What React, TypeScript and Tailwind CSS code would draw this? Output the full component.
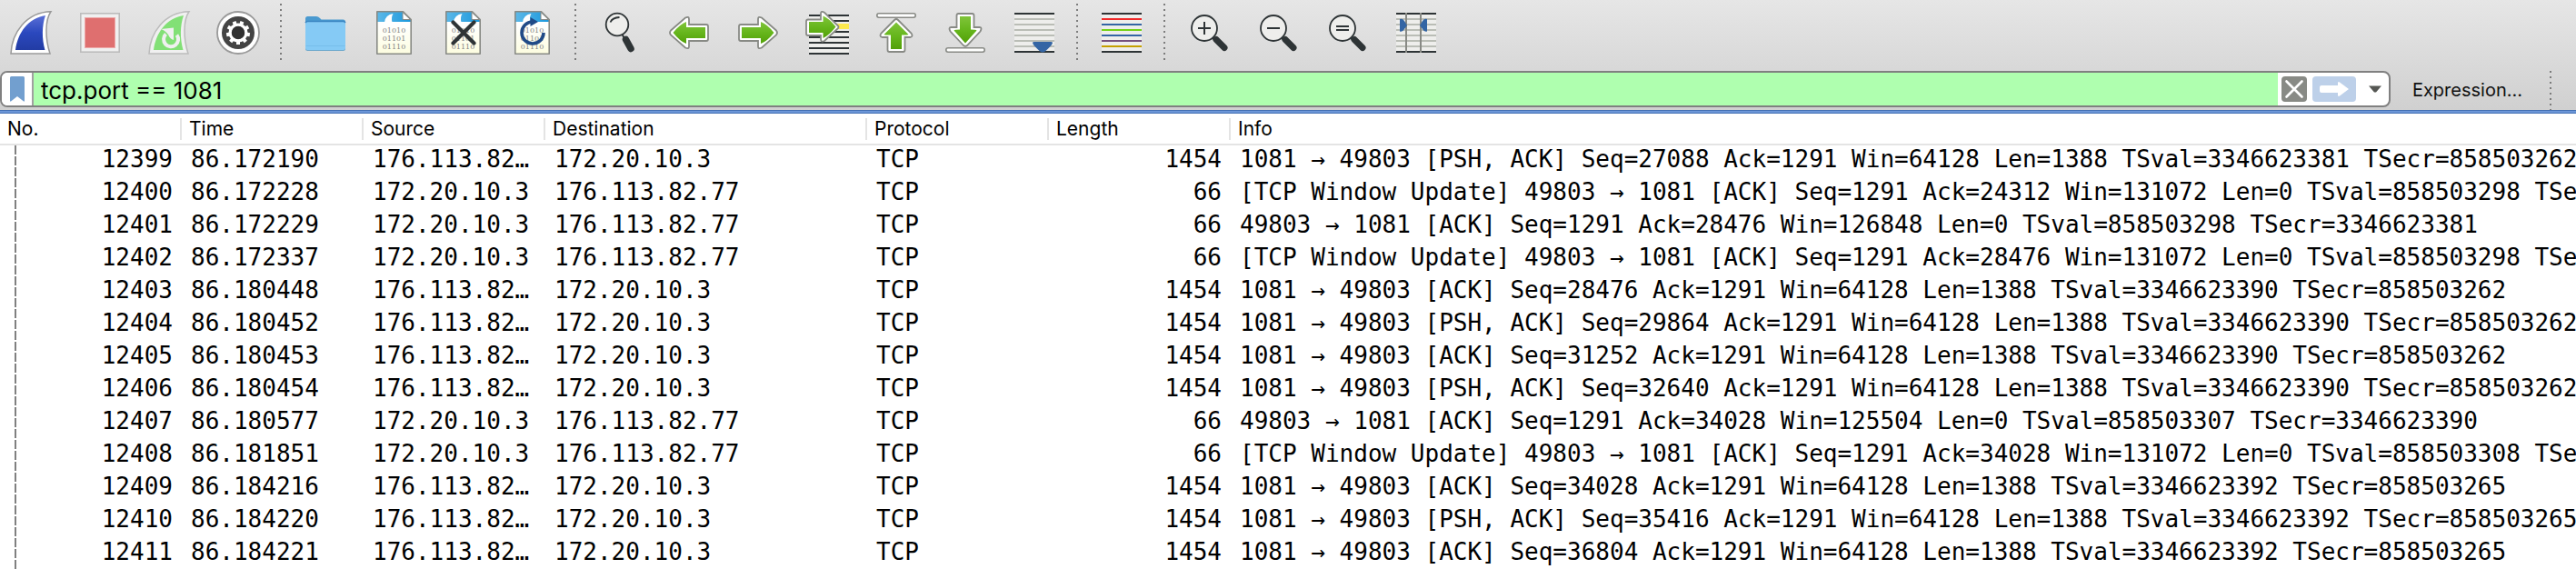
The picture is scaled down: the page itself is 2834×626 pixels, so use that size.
import React from "react";

type Packet = [string, string, string, string, string, string];

const A = "176.113.82.77";
const B = "172.20.10.3";

const packets: Packet[] = [
  ["12399", "86.172190", A, B, "1454", "1081 → 49803 [PSH, ACK] Seq=27088 Ack=1291 Win=64128 Len=1388 TSval=3346623381 TSecr=858503262"],
  ["12400", "86.172228", B, A, "66", "[TCP Window Update] 49803 → 1081 [ACK] Seq=1291 Ack=24312 Win=131072 Len=0 TSval=858503298 TSecr=3346623381"],
  ["12401", "86.172229", B, A, "66", "49803 → 1081 [ACK] Seq=1291 Ack=28476 Win=126848 Len=0 TSval=858503298 TSecr=3346623381"],
  ["12402", "86.172337", B, A, "66", "[TCP Window Update] 49803 → 1081 [ACK] Seq=1291 Ack=28476 Win=131072 Len=0 TSval=858503298 TSecr=3346623381"],
  ["12403", "86.180448", A, B, "1454", "1081 → 49803 [ACK] Seq=28476 Ack=1291 Win=64128 Len=1388 TSval=3346623390 TSecr=858503262"],
  ["12404", "86.180452", A, B, "1454", "1081 → 49803 [PSH, ACK] Seq=29864 Ack=1291 Win=64128 Len=1388 TSval=3346623390 TSecr=858503262"],
  ["12405", "86.180453", A, B, "1454", "1081 → 49803 [ACK] Seq=31252 Ack=1291 Win=64128 Len=1388 TSval=3346623390 TSecr=858503262"],
  ["12406", "86.180454", A, B, "1454", "1081 → 49803 [PSH, ACK] Seq=32640 Ack=1291 Win=64128 Len=1388 TSval=3346623390 TSecr=858503262"],
  ["12407", "86.180577", B, A, "66", "49803 → 1081 [ACK] Seq=1291 Ack=34028 Win=125504 Len=0 TSval=858503307 TSecr=3346623390"],
  ["12408", "86.181851", B, A, "66", "[TCP Window Update] 49803 → 1081 [ACK] Seq=1291 Ack=34028 Win=131072 Len=0 TSval=858503308 TSecr=3346623390"],
  ["12409", "86.184216", A, B, "1454", "1081 → 49803 [ACK] Seq=34028 Ack=1291 Win=64128 Len=1388 TSval=3346623392 TSecr=858503265"],
  ["12410", "86.184220", A, B, "1454", "1081 → 49803 [PSH, ACK] Seq=35416 Ack=1291 Win=64128 Len=1388 TSval=3346623392 TSecr=858503265"],
  ["12411", "86.184221", A, B, "1454", "1081 → 49803 [ACK] Seq=36804 Ack=1291 Win=64128 Len=1388 TSval=3346623392 TSecr=858503265"],
];

const columns = ["No.", "Time", "Source", "Destination", "Protocol", "Length", "Info"];

function Defs() {
  return (
    <svg className="absolute size-0" aria-hidden="true">
      <defs>
        <linearGradient id="blueFin" x1="0" y1="0" x2="0" y2="1">
          <stop offset="0" stopColor="#5a70d6" />
          <stop offset="0.5" stopColor="#2b48be" />
          <stop offset="1" stopColor="#223ca4" />
        </linearGradient>
        <linearGradient id="green" x1="0" y1="0" x2="0" y2="1">
          <stop offset="0" stopColor="#80c43a" />
          <stop offset="0.5" stopColor="#66b61c" />
          <stop offset="1" stopColor="#52a008" />
        </linearGradient>
        <linearGradient id="paper" x1="0" y1="0" x2="0" y2="1">
          <stop offset="0.3" stopColor="#ffffff" />
          <stop offset="1" stopColor="#fdfde0" />
        </linearGradient>
        <linearGradient id="sky" x1="0" y1="0" x2="1" y2="0">
          <stop offset="0" stopColor="#5cb8e8" />
          <stop offset="1" stopColor="#1b98dc" />
        </linearGradient>
      </defs>
    </svg>
  );
}

function Svg({ children }: { children: React.ReactNode }) {
  return (
    <svg viewBox="0 0 48 48" className="size-12" fill="none" aria-hidden="true">
      {children}
    </svg>
  );
}

function Fin({ restart = false }: { restart?: boolean }) {
  return (
    <Svg>
      <path
        d="M46 .8C39.500 10 39.500 30 45 47H2C3 24 19 1.500 46 .8Z"
        fill={restart ? "#f0f0f0" : "#fff"}
        stroke={restart ? "#bcbcbc" : "#9a9a9a"}
        strokeWidth="1.500"
      />
      <path
        d="M40 5C36 16 36 31 39.500 43H7C9.500 24 21 8 40 5Z"
        fill={restart ? "#82e076" : "url(#blueFin)"}
      />
      {restart && (
        <>
          <path d="M20.500 25.500A8 8 0 1 0 32.500 26.500" stroke="#f0f0f0" strokeWidth="4" />
          <path d="M15 20L29 18.500V32Q25 31 23 26Q19 21 15 20Z" fill="#f0f0f0" />
        </>
      )}
    </Svg>
  );
}

function Stop() {
  return (
    <Svg>
      <rect x="2.800" y="2.800" width="42.400" height="42.400" fill="#f0f0f0" stroke="#bcbcbc" strokeWidth="1.600" />
      <rect x="7" y="7" width="34" height="34" fill="#eda9a9" />
      <rect x="8" y="8" width="32" height="32" fill="#df6f6f" />
    </Svg>
  );
}

function Gear() {
  return (
    <Svg>
      <circle cx="24" cy="24" r="23" fill="#fff" stroke="#9a9a9a" strokeWidth="1.800" />
      <circle cx="24" cy="24" r="18" fill="#444" />
      <circle cx="24" cy="24" r="8.800" stroke="#fff" strokeWidth="3.400" />
      {[20, 60, 100, 140, 180, 220, 260, 300, 340].map((a) => (
        <rect key={a} x="22" y="11" width="4" height="4" fill="#fff" transform={`rotate(${a} 24 24)`} />
      ))}
      <circle cx="24" cy="24" r="7.200" fill="#303030" />
    </Svg>
  );
}

function Folder() {
  return (
    <Svg>
      <path d="M2 8.500Q2 6 4.500 6H14Q16 6 18 8L19.500 9.500H43.500Q46 9.500 46 12V22H2Z" fill="#4a9ad0" />
      <rect x="2" y="13" width="44" height="31" rx="2.500" fill="#6fa9cc" />
      <rect x="2" y="12" width="44" height="31" rx="2.500" fill="#85caf5" />
      <path d="M2 13Q2.500 11.500 4.500 11.500H43.500Q45.500 11.500 46 13" stroke="#3c86c2" strokeWidth="1.500" />
      <path d="M2.500 38.500H45.500" stroke="#76bdeb" />
    </Svg>
  );
}

function Page({ children }: { children?: React.ReactNode }) {
  return (
    <Svg>
      <path d="M5 1H33L42 10V47H5Z" fill="url(#paper)" />
      <path d="M5 1H33L42 10V12H5Z" fill="url(#sky)" />
      <path d="M13 12.500Q14 4 22.500 3Q20 7 21.500 12.500Z" fill="#fff" />
      <g fill="#858585" fontFamily="DejaVu Serif, serif" fontSize="8" textAnchor="middle">
        <text x="23.500" y="24">01010</text>
        <text x="23.500" y="33">01101</text>
        <text x="23.500" y="42">01110</text>
      </g>
      <path d="M33 1.500V9.500H41.500Z" fill="#fff" stroke="#888a85" strokeWidth="1" />
      <path d="M4.800 .8H33.500L42.200 9.500V47.200H4.800Z" stroke="#888a85" strokeWidth="1.600" strokeLinejoin="round" />
      {children}
    </Svg>
  );
}

function Find() {
  return (
    <Svg>
      <path d="M26 25L30 32" stroke="#2e3436" strokeWidth="2" />
      <circle cx="21" cy="15" r="12.300" fill="#eeeeec" stroke="#2e3436" strokeWidth="1.800" />
      <path d="M13.500 12.500Q15.500 7.500 23.500 7" stroke="#2e3436" strokeWidth="1.800" />
      <path d="M30.500 31.500L36 41.500" stroke="#2e3436" strokeWidth="7.500" strokeLinecap="round" />
    </Svg>
  );
}

function ArrowShape({ flip = false }: { flip?: boolean }) {
  return (
    <g transform={flip ? "matrix(-1 0 0 1 48 0)" : undefined}>
      <path
        d="M4 21.500L20 7.500Q24 5.500 24 9V15H43Q45 15 45 17V31Q45 33 43 33H24V39Q24 42.500 20 40.500L4 26.500Q2 24 4 21.500Z"
        fill="#fff"
        stroke="#888a85"
        strokeWidth="1.800"
      />
      <path d="M6.500 24Q14 14.500 21 12V18H42V30H21V36Q14 33.500 6.500 24Z" fill="url(#green)" />
    </g>
  );
}

function VArrow({ up = false }: { up?: boolean }) {
  return (
    <Svg>
      <rect x="2.800" y={up ? 2.8 : 40.8} width="42.400" height="4.400" rx="2.200" fill="#fff" stroke="#888a85" strokeWidth="1.600" />
      {up ? (
        <>
          <path d="M22 10L7.500 24.500Q5 28 8.500 29H14.500V43Q14.500 45 16.500 45H31.500Q33.500 45 33.500 43V29H39.500Q43 28 40.500 24.500L26 10Q24 8 22 10Z" fill="#fff" stroke="#888a85" strokeWidth="1.800" />
          <path d="M24 12.500L10.500 26Q11 26.500 18 26.500V42H30V26.500Q37 26.500 37.500 26Z" fill="url(#green)" />
        </>
      ) : (
        <>
          <path d="M22 38L7.500 22.500Q5 18 8.500 18H14.500V5Q14.500 3 16.500 3H31.500Q33.500 3 33.500 5V18H39.500Q43 18 40.500 22.500L26 38Q24 39.500 22 38Z" fill="#fff" stroke="#888a85" strokeWidth="1.800" />
          <path d="M24 35.500L11.500 21.500Q12 20.500 18 20.500V6H30V20.500Q36 20.500 36.500 21.500Z" fill="url(#green)" />
        </>
      )}
    </Svg>
  );
}

function Lines({ colors, start = 2, children }: { colors: string[]; start?: number; children?: React.ReactNode }) {
  return (
    <Svg>
      <rect x={start} y={start} width="44" height="44" fill="#eeeeec" />
      {colors.map((c, i) => (
        <rect key={i} x={start} y={start + i * 6} width="44" height="2" fill={c} />
      ))}
      {children}
    </Svg>
  );
}

const K = "#2e3436";
const G = "#babdb6";

function Zoom({ children }: { children: React.ReactNode }) {
  return (
    <Svg>
      <path d="M27 28L31 32" stroke={K} strokeWidth="3" />
      <circle cx="19" cy="19" r="14" fill="#eeeeec" stroke={K} strokeWidth="1.800" />
      <path d="M32 31.500L41 40.500" stroke={K} strokeWidth="7" strokeLinecap="round" />
      <g stroke={K} strokeWidth="2">{children}</g>
    </Svg>
  );
}

function Tool({ label, children }: { label: string; children: React.ReactNode }) {
  return (
    <button type="button" aria-label={label} className="flex size-12 shrink-0 items-center justify-center">
      {children}
    </button>
  );
}

function Dots({ className = "" }: { className?: string }) {
  return (
    <div
      className={
        "w-[2px] shrink-0 bg-[repeating-linear-gradient(to_bottom,#7c7c7c_0_2px,transparent_2px_6px)] " + className
      }
    />
  );
}

function Toolbar() {
  return (
    <div className="flex h-[78px] shrink-0 items-start overflow-hidden pl-[10px]">
      <div className="flex gap-7 pt-3">
        <Tool label="Start capture"><Fin /></Tool>
        <Tool label="Stop capture"><Stop /></Tool>
        <Tool label="Restart capture"><Fin restart /></Tool>
        <Tool label="Capture options"><Gear /></Tool>
      </div>
      <Dots className="mt-1 ml-[22px] h-[62px]" />
      <div className="ml-6 flex gap-7 pt-3">
        <Tool label="Open file"><Folder /></Tool>
        <Tool label="Save file"><Page /></Tool>
        <Tool label="Close file">
          <Page><path d="M12.500 12.500L35.500 35.500M35.500 12.500L12.500 35.500" stroke={K} strokeWidth="4.200" strokeLinecap="round" /></Page>
        </Tool>
        <Tool label="Reload file">
          <Page>
            <path d="M24 12A12 12 0 1 0 36 24" stroke="#204a87" strokeWidth="3.600" />
            <path d="M21.500 7L30 12L21.500 17Z" fill="#204a87" />
          </Page>
        </Tool>
      </div>
      <Dots className="mt-1 ml-[22px] h-[62px]" />
      <div className="ml-6 flex gap-7 pt-3">
        <Tool label="Find packet"><Find /></Tool>
        <Tool label="Previous packet"><Svg><ArrowShape /></Svg></Tool>
        <Tool label="Next packet"><Svg><ArrowShape flip /></Svg></Tool>
        <Tool label="Go to packet">
          <Lines colors={[K, K, K, K, K, K, K, K]} start={4}>
            <rect x="32" y="14" width="16" height="6" fill="#fce94f" />
            <path d="M35.500 16L21 1.800Q17 -.5 17 3V9.500H3Q1 9.500 1 11.500V25Q1 27 3 27H17V31Q17 35 21 33L35.500 19.500Q37.500 17.500 35.500 16Z" fill="#fff" stroke="#888a85" strokeWidth="1.800" />
            <path d="M33.500 17.500Q26 8 19.500 5.500V12H4V24H19.500V30Q26 27 33.500 17.500Z" fill="url(#green)" />
          </Lines>
        </Tool>
        <Tool label="First packet"><VArrow up /></Tool>
        <Tool label="Last packet"><VArrow /></Tool>
        <Tool label="Auto scroll">
          <Lines colors={[K, G, G, G, G, G, G, K]}>
            <path d="M22 35Q22 34 24 34H42Q44 34 44 35Q44 37 37 43.500Q33 47.500 29 43.500Q22 37 22 35Z" fill="#3465a4" />
          </Lines>
        </Tool>
      </div>
      <Dots className="mt-1 ml-[22px] h-[62px]" />
      <div className="ml-6 flex pt-3">
        <Tool label="Colorize packets">
          <Lines colors={[K, "#ef2929", "#3465a4", "#73d216", "#3465a4", "#75507b", "#c4a000", K]} />
        </Tool>
      </div>
      <Dots className="mt-1 ml-[22px] h-[62px]" />
      <div className="ml-6 flex gap-7 pt-3">
        <Tool label="Zoom in"><Zoom><path d="M12 19H26M19 12V26" /></Zoom></Tool>
        <Tool label="Zoom out"><Zoom><path d="M12 19H26" /></Zoom></Tool>
        <Tool label="Normal size"><Zoom><path d="M12 17H26M12 21H26" /></Zoom></Tool>
        <Tool label="Resize columns">
          <Lines colors={[K, G, G, G, G, G, G, K]}>
            <path d="M13 2V46M29 2V46" stroke="#888a85" strokeWidth="2" />
            <path d="M6 9Q9 8 11 11L14 16L11 20Q9 23.500 6 22.500ZM36 9Q33 8 31 11L28 16L31 20Q33 23.500 36 22.500Z" fill="#3465a4" />
          </Lines>
        </Tool>
      </div>
    </div>
  );
}

function FilterBar() {
  return (
    <div className="flex h-[43px] shrink-0 items-start overflow-hidden">
      <div className="flex h-10 min-w-0 flex-1 items-stretch overflow-hidden rounded-lg border-2 border-[#808080] bg-white">
        <button type="button" aria-label="Filter bookmarks" className="flex w-[35px] shrink-0 items-center justify-center border-r-2 border-[#a0a0a0] bg-white">
          <svg viewBox="0 0 16 28" className="h-7 w-4" aria-hidden="true">
            <path d="M0 1.500Q0 0 1.500 0H14.500Q16 0 16 1.500V27.500H15L8 22L1 27.500H0Z" fill="#729fcf" />
          </svg>
        </button>
        <input
          type="text"
          aria-label="Display filter"
          defaultValue="tcp.port == 1081"
          className="min-w-0 flex-1 bg-[#afffaf] px-2 pt-[2px] text-[26px] text-black outline-none"
        />
        <div className="flex shrink-0 items-center gap-[6px] pl-1">
          <button type="button" aria-label="Clear filter" className="flex size-7 items-center justify-center rounded bg-[#888a85]">
            <svg viewBox="0 0 28 28" className="size-7" aria-hidden="true">
              <path d="M5.500 5.500L22.500 22.500M22.500 5.500L5.500 22.500" stroke="#fff" strokeWidth="2.600" strokeLinecap="round" />
            </svg>
          </button>
          <button type="button" aria-label="Apply filter" className="flex h-7 w-12 items-center justify-center rounded bg-[#bdd0e9]">
            <svg viewBox="0 0 48 28" className="h-7 w-12" aria-hidden="true">
              <path d="M10 10H28V7Q28.500 5.500 30 6.500L40 14L30 21.500Q28.500 22.500 28 21V18H10Q8 18 8 16V12Q8 10 10 10Z" fill="#fff" />
            </svg>
          </button>
          <button type="button" aria-label="Recent filters" className="flex h-7 w-[30px] items-center justify-center">
            <svg viewBox="0 0 14 8" className="h-2 w-[14px]" aria-hidden="true">
              <path d="M0 .5H14L8 7.500H6Z" fill="#555753" />
            </svg>
          </button>
        </div>
      </div>
      <button type="button" className="ml-6 h-[42px] shrink-0 text-[20px] text-[#111]">Expression…</button>
      <Dots className="ml-[30px] h-[43px]" />
      <div className="w-[27px] shrink-0" />
    </div>
  );
}

function PacketList() {
  return (
    <table className="w-full table-fixed border-separate border-spacing-0 bg-white">
      <colgroup>
        <col className="w-[200px]" />
        <col className="w-[200px]" />
        <col className="w-[200px]" />
        <col className="w-[354px]" />
        <col className="w-[200px]" />
        <col className="w-[200px]" />
        <col />
      </colgroup>
      <thead>
        <tr>
          {columns.map((c, i) => (
            <th key={c} className="h-[35px] border-b-2 border-[#e4e4e4] p-0 text-left text-[21px] leading-6 font-normal text-black">
              <div className={i < 6 ? "border-r-2 border-[#e4e4e4] pl-2" : "pl-2"}>{c}</div>
            </th>
          ))}
        </tr>
      </thead>
      <tbody className="font-['DejaVu_Sans_Mono',monospace] text-[26px] leading-[30px] text-black">
        {packets.map(([no, time, src, dst, len, info]) => (
          <tr key={no}>
            <td className="p-0">
              <div className="flex h-9 pr-[10px] pl-4">
                <span className="h-9 w-[2px] bg-[repeating-linear-gradient(to_bottom,#808080_0_10px,transparent_10px_12px)]" />
                <span className="flex-1 text-right">{no}</span>
              </div>
            </td>
            <td className="truncate p-0 pb-[6px] pl-[10px]">{time}</td>
            <td className="truncate p-0 pr-2 pb-[6px] pl-[10px]">{src}</td>
            <td className="truncate p-0 pb-[6px] pl-[10px]">{dst}</td>
            <td className="truncate p-0 pb-[6px] pl-[10px]">TCP</td>
            <td className="p-0 pr-[10px] pb-[6px] text-right">{len}</td>
            <td className="overflow-hidden p-0 pb-[6px] pl-[10px] whitespace-nowrap">{info}</td>
          </tr>
        ))}
      </tbody>
    </table>
  );
}

export default function App() {
  return (
    <div className="flex h-screen flex-col overflow-hidden bg-white font-['Inter',sans-serif]">
      <Defs />
      <header className="shrink-0 bg-linear-to-b from-[#e6e6e6] to-[#d0d0d0]">
        <Toolbar />
        <FilterBar />
      </header>
      <div className="h-1 shrink-0 border-y border-[#4470b4] bg-[#6c96d8]" />
      <PacketList />
    </div>
  );
}
